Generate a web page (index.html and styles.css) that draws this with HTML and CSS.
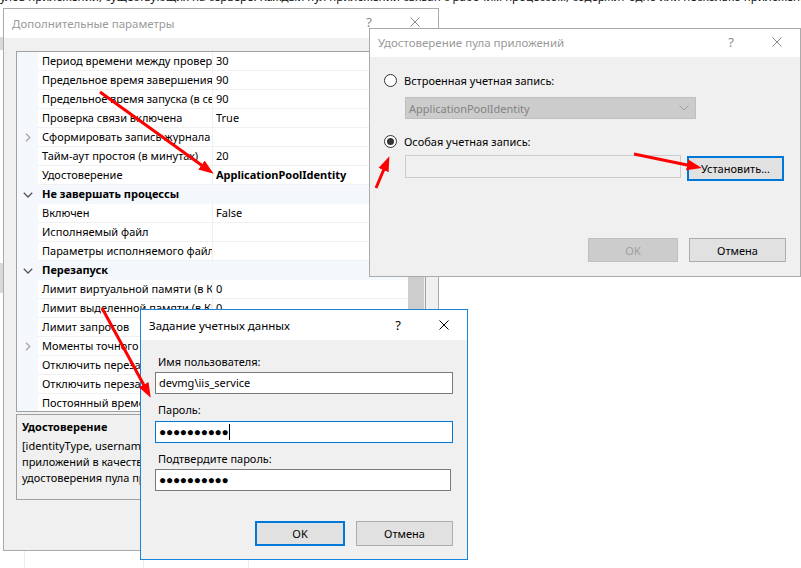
FILE: index.html
```html
<!DOCTYPE html>
<html lang="ru">
<head>
<meta charset="utf-8">
<title>IIS</title>
<link rel="stylesheet" href="styles.css">
</head>
<body>
<div class="desktop">
  <p class="bg-text">улов приложений, существующих на сервере. Каждый пул приложений связан с рабочим процессом, содержит одно или несколько приложений и обеспечивает изоляцию</p>
  <div class="bg-col c1"></div>
  <div class="bg-col c2"></div>
  <div class="bg-col c3"></div>
  <div class="bg-edge e1"></div>
  <div class="bg-edge e2"></div>

  <section class="win win-adv">
    <header class="titlebar">
      <span class="title">Дополнительные параметры</span>
      <span class="cap">?</span>
      <span class="cap"><svg width="10" height="10" viewBox="0 0 10 10"><path d="M0.5 0.5 L9.5 9.5 M9.5 0.5 L0.5 9.5" stroke="#8a8a8a" stroke-width="1" fill="none"/></svg></span>
    </header>
    <div class="adv-body">
      <div class="pgrid">
        <div class="pg-rows">
          <div class="pg-row"><span class="pg-gut"></span><span class="pg-name">Период времени между проверками связи</span><span class="pg-val">30</span></div>
          <div class="pg-row"><span class="pg-gut"></span><span class="pg-name">Предельное время завершения работы</span><span class="pg-val">90</span></div>
          <div class="pg-row"><span class="pg-gut"></span><span class="pg-name">Предельное время запуска (в секундах)</span><span class="pg-val">90</span></div>
          <div class="pg-row"><span class="pg-gut"></span><span class="pg-name">Проверка связи включена</span><span class="pg-val">True</span></div>
          <div class="pg-row"><span class="pg-gut"><svg width="6" height="9" viewBox="0 0 6 9"><path d="M1 0.8 L4.8 4.5 L1 8.2" stroke="#a6a6a6" stroke-width="1.3" fill="none"/></svg></span><span class="pg-name">Сформировать запись журнала событий</span><span class="pg-val"></span></div>
          <div class="pg-row"><span class="pg-gut"></span><span class="pg-name">Тайм-аут простоя (в минутах)</span><span class="pg-val">20</span></div>
          <div class="pg-row"><span class="pg-gut"></span><span class="pg-name">Удостоверение</span><span class="pg-val strong">ApplicationPoolIdentity</span></div>
          <div class="pg-row cat"><span class="pg-gut"><svg width="10" height="6" viewBox="0 0 10 6"><path d="M0.8 0.8 L5 5 L9.2 0.8" stroke="#555" stroke-width="1.3" fill="none"/></svg></span><span class="pg-cat">Не завершать процессы</span></div>
          <div class="pg-row"><span class="pg-gut"></span><span class="pg-name">Включен</span><span class="pg-val">False</span></div>
          <div class="pg-row"><span class="pg-gut"></span><span class="pg-name">Исполняемый файл</span><span class="pg-val"></span></div>
          <div class="pg-row"><span class="pg-gut"></span><span class="pg-name">Параметры исполняемого файла</span><span class="pg-val"></span></div>
          <div class="pg-row cat"><span class="pg-gut"><svg width="10" height="6" viewBox="0 0 10 6"><path d="M0.8 0.8 L5 5 L9.2 0.8" stroke="#555" stroke-width="1.3" fill="none"/></svg></span><span class="pg-cat">Перезапуск</span></div>
          <div class="pg-row"><span class="pg-gut"></span><span class="pg-name">Лимит виртуальной памяти (в КБ)</span><span class="pg-val">0</span></div>
          <div class="pg-row"><span class="pg-gut"></span><span class="pg-name">Лимит выделенной памяти (в КБ)</span><span class="pg-val">0</span></div>
          <div class="pg-row"><span class="pg-gut"></span><span class="pg-name">Лимит запросов</span><span class="pg-val">0</span></div>
          <div class="pg-row"><span class="pg-gut"><svg width="6" height="9" viewBox="0 0 6 9"><path d="M1 0.8 L4.8 4.5 L1 8.2" stroke="#a6a6a6" stroke-width="1.3" fill="none"/></svg></span><span class="pg-name">Моменты точного времени</span><span class="pg-val"></span></div>
          <div class="pg-row"><span class="pg-gut"></span><span class="pg-name">Отключить перезапуск для изменений</span><span class="pg-val">False</span></div>
          <div class="pg-row"><span class="pg-gut"></span><span class="pg-name">Отключить перезапуск при перекрытии</span><span class="pg-val">False</span></div>
          <div class="pg-row"><span class="pg-gut"></span><span class="pg-name">Постоянный временной интервал</span><span class="pg-val">1740</span></div>
        </div>
        <div class="pg-scroll"><div class="thumb"></div></div>
      </div>
      <div class="pg-desc">
        <b>Удостоверение</b>
        <span>[identityType, username, password] Настраивает пул приложений</span>
        <span>приложений в качестве встроенной учетной записи, т. е.</span>
        <span>удостоверения пула приложений (рекомендуется)</span>
      </div>
    </div>
  </section>

  <section class="win win-pool">
    <header class="titlebar">
      <span class="title">Удостоверение пула приложений</span>
      <span class="cap">?</span>
      <span class="cap"><svg width="10" height="10" viewBox="0 0 10 10"><path d="M0.5 0.5 L9.5 9.5 M9.5 0.5 L0.5 9.5" stroke="#8a8a8a" stroke-width="1" fill="none"/></svg></span>
    </header>
    <div class="pool-body">
      <div class="radio-row"><span class="radio"></span><span>Встроенная учетная запись:</span></div>
      <div class="combo"><span>ApplicationPoolIdentity</span><svg width="10" height="6" viewBox="0 0 10 6"><path d="M0.5 0.5 L5 5 L9.5 0.5" stroke="#a0a0a0" stroke-width="1" fill="none"/></svg></div>
      <div class="radio-row r2"><span class="radio on"></span><span>Особая учетная запись:</span></div>
      <div class="set-row">
        <div class="ro-field"></div>
        <button class="btn focus set">Установить...</button>
      </div>
      <div class="btn-row">
        <button class="btn disabled ok">OK</button>
        <button class="btn cancel">Отмена</button>
      </div>
    </div>
  </section>

  <section class="win win-cred">
    <header class="titlebar">
      <span class="title">Задание учетных данных</span>
      <span class="cap">?</span>
      <span class="cap"><svg width="10" height="10" viewBox="0 0 10 10"><path d="M0.5 0.5 L9.5 9.5 M9.5 0.5 L0.5 9.5" stroke="#000" stroke-width="1" fill="none"/></svg></span>
    </header>
    <div class="cred-body">
      <label class="lbl first">Имя пользователя:</label>
      <div class="field">devmg\iis_service</div>
      <label class="lbl">Пароль:</label>
      <div class="field focused"><span class="dots">●●●●●●●●●●</span><span class="caret"></span></div>
      <label class="lbl">Подтвердите пароль:</label>
      <div class="field narrow"><span class="dots">●●●●●●●●●●</span></div>
      <div class="btn-row">
        <button class="btn focus ok">OK</button>
        <button class="btn cancel">Отмена</button>
      </div>
    </div>
  </section>

  <svg class="arrows" width="801" height="568" viewBox="0 0 801 568">
    <defs>
      <marker id="ah" markerWidth="15" markerHeight="12" refX="5" refY="6" orient="auto" markerUnits="userSpaceOnUse">
        <path d="M0 0.5 L15 6 L0 11.5 Z" fill="#ff0000"/>
      </marker>
    </defs>
    <line x1="100" y1="92" x2="205.5" y2="168" stroke="#ff0000" stroke-width="3" marker-end="url(#ah)"/>
    <line x1="376" y1="188" x2="385.5" y2="165.5" stroke="#ff0000" stroke-width="3" marker-end="url(#ah)"/>
    <line x1="634" y1="154" x2="692" y2="166" stroke="#ff0000" stroke-width="3" marker-end="url(#ah)"/>
    <line x1="102" y1="308" x2="146" y2="389" stroke="#ff0000" stroke-width="3" marker-end="url(#ah)"/>
  </svg>
</div>
</body>
</html>
```

FILE: styles.css
```css
* { box-sizing: border-box; }
html, body { margin: 0; padding: 0; background: #fff; }
body {
  font-family: "Noto Sans", "DejaVu Sans", sans-serif;
  font-size: 11px;
  color: #000;
}
.desktop {
  position: relative;
  width: 801px;
  height: 568px;
  overflow: hidden;
  background: #fff;
}
.bg-text {
  position: absolute;
  left: 0;
  top: -11px;
  margin: 0;
  white-space: nowrap;
  line-height: 16px;
  font-size: 11.5px;
  color: #111;
}
.bg-col {
  position: absolute;
  bottom: 0;
  width: 1px;
  background: #e6edf5;
}
.bg-col.c1 { left: 24px; height: 20px; }
.bg-col.c2 { left: 143px; height: 20px; }
.bg-col.c3 { left: 248px; height: 10px; }
.bg-edge {
  position: absolute;
  left: 0;
  width: 3px;
  background: #d9d9d9;
}
.bg-edge.e1 { top: 37px; height: 13px; }
.bg-edge.e2 { top: 263px; height: 30px; }

/* windows */
.win {
  position: absolute;
  display: flex;
  flex-direction: column;
  background: #f0f0f0;
  border: 1px solid #aaaaaa;
}
.win-adv { left: 3px; top: 8px; width: 436px; height: 543px; }
.win-pool { left: 369px; top: 28px; width: 432px; height: 249px; }
.win-cred { left: 140px; top: 309px; width: 328px; height: 251px; border-color: #1883d7; }

.titlebar {
  display: flex;
  align-items: center;
  height: 29px;
  flex: none;
  background: #fff;
  font-size: 11.5px;
}
.win-pool .titlebar { height: 28px; padding-bottom: 2px; }
.win-cred .titlebar { height: 30px; }
.title {
  flex: 1;
  padding-left: 8px;
  color: #9a9a9a;
  white-space: nowrap;
}
.win-cred .title { color: #000; }
.cap {
  width: 46px;
  flex: none;
  display: flex;
  justify-content: center;
  align-items: center;
  color: #8a8a8a;
  font-size: 13px;
}
.win-adv .cap { margin-top: -4px; }
.win-cred .cap { color: #000; }
.cap svg { display: block; }

/* property grid */
.adv-body {
  flex: 1;
  padding: 13px 12px 0 12px;
  display: flex;
  flex-direction: column;
  gap: 2px;
}
.pgrid {
  width: 410px;
  height: 361px;
  flex: none;
  border: 1px solid #a0a0a0;
  background: #fff;
  display: flex;
  overflow: hidden;
}
.pg-rows {
  width: 391px;
  flex: none;
  display: flex;
  flex-direction: column;
}
.pg-row {
  display: flex;
  height: 19px;
  flex: none;
  line-height: 18px;
}
.pg-gut {
  width: 21px;
  flex: none;
  background: #f4f7fc;
  display: flex;
  align-items: center;
  justify-content: center;
}
.pg-gut svg { display: block; }
.pg-name {
  width: 175px;
  flex: none;
  padding-left: 4px;
  border-right: 1px solid #f0f0f0;
  border-bottom: 1px solid #f0f0f0;
  overflow: hidden;
  white-space: nowrap;
}
.pg-val {
  flex: 1;
  padding-left: 3px;
  border-bottom: 1px solid #f0f0f0;
  white-space: nowrap;
  overflow: hidden;
}
.pg-val.strong { font-weight: bold; }
.pg-row.cat { background: #f4f7fc; }
.pg-cat {
  padding-left: 4px;
  font-weight: bold;
  white-space: nowrap;
}
.pg-scroll {
  width: 17px;
  flex: none;
  background: #f0f0f0;
}
.thumb {
  width: 16px;
  height: 170px;
  margin-top: 128px;
  background: #cdcdcd;
}
.pg-desc {
  width: 410px;
  height: 86px;
  flex: none;
  border: 1px solid #a0a0a0;
  padding: 4px 5px;
  line-height: 16px;
  overflow: hidden;
}
.pg-desc b { display: block; margin-bottom: 3px; }
.pg-desc span { display: block; white-space: nowrap; }

/* pool identity dialog */
.pool-body {
  flex: 1;
  padding: 15px 14px 14px 14px;
  display: flex;
  flex-direction: column;
}
.radio-row {
  display: flex;
  align-items: center;
  gap: 7px;
  height: 16px;
  white-space: nowrap;
}
.radio-row.r2 { margin-top: 14px; }
.radio {
  width: 13px;
  height: 13px;
  flex: none;
  border: 1px solid #333;
  border-radius: 50%;
  background: #fff;
  display: flex;
  align-items: center;
  justify-content: center;
}
.radio.on::after {
  content: "";
  width: 7px;
  height: 7px;
  border-radius: 50%;
  background: #333;
}
.combo {
  margin: 9px 0 0 21px;
  width: 291px;
  height: 22px;
  background: #cccccc;
  border: 1px solid #bfbfbf;
  color: #838383;
  display: flex;
  align-items: center;
  justify-content: space-between;
  padding: 0 6px 0 3px;
}
.set-row {
  margin: 6px 0 0 21px;
  display: flex;
  align-items: flex-start;
  gap: 6px;
}
.ro-field {
  width: 276px;
  height: 23px;
  background: #f0f0f0;
  border: 1px solid #cccccc;
}
.btn {
  font: inherit;
  color: #000;
  height: 25px;
  background: #e1e1e1;
  border: 1px solid #adadad;
  padding: 0;
  margin: 0;
}
.btn.set { width: 97px; margin-top: 1px; }
.btn.focus { border: 2px solid #0078d7; }
.btn.disabled { background: #cccccc; border-color: #bfbfbf; color: #a0a0a0; }
.btn.ok { width: 90px; }
.btn.cancel { width: 97px; }
.win-pool .btn.ok, .win-pool .btn.cancel { height: 24px; }
.btn-row {
  margin-top: auto;
  display: flex;
  justify-content: flex-end;
  gap: 11px;
}

/* credentials dialog */
.cred-body {
  flex: 1;
  padding: 14px 14px 13px 14px;
  display: flex;
  flex-direction: column;
}
.lbl {
  display: block;
  line-height: 16px;
  padding-left: 3px;
  margin-top: 8px;
  white-space: nowrap;
}
.lbl.first { margin-top: 0; }
.field {
  height: 22px;
  margin-top: 2px;
  border: 1px solid #7a7a7a;
  background: #fff;
  padding-left: 3px;
  line-height: 20px;
  display: flex;
  align-items: center;
  white-space: nowrap;
}
.field.focused { border-color: #0078d7; margin-top: 3px; }
.field.narrow { width: 296px; }
.dots {
  font-family: "Liberation Sans", sans-serif;
  font-size: 12px;
  letter-spacing: -0.3px;
}
.caret {
  width: 1px;
  height: 16px;
  background: #000;
  margin-left: 1px;
}

.arrows {
  position: absolute;
  left: 0;
  top: 0;
  pointer-events: none;
}
```
